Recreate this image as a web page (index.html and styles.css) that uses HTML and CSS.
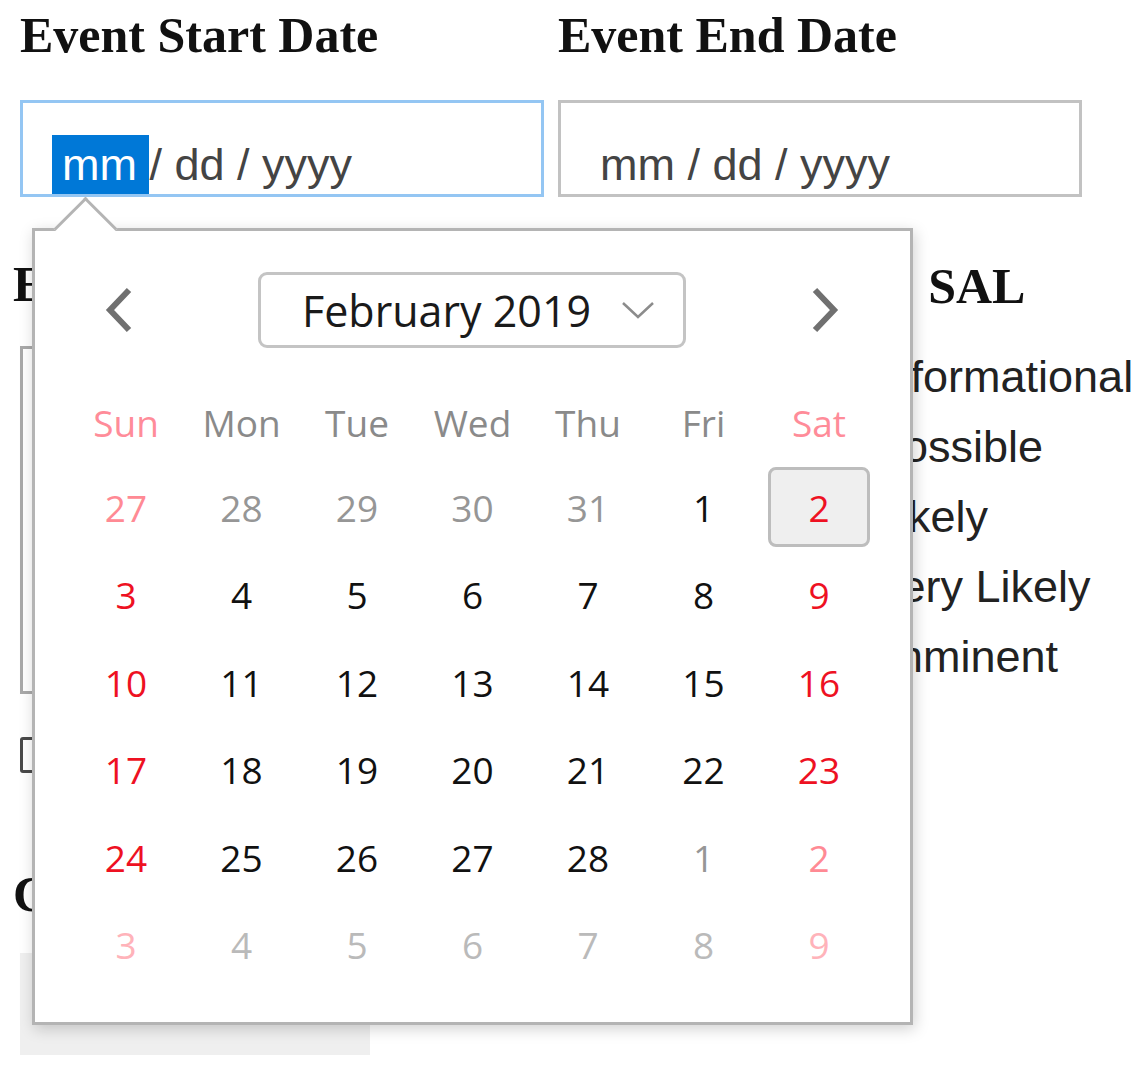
FILE: index.html
```html
<!DOCTYPE html>
<html lang="en">
<head>
  <meta charset="UTF-8" />
  <title>Event Dates</title>
  <meta name="viewport" content="width=device-width, initial-scale=1.0" />
  <link rel="stylesheet" href="styles.css">
</head>
<body>
  <div class="page">
    <div class="column">
      <h3 class="field-title">Event Start Date</h3>
      <div class="date-input focused"><span class="segment-selected">mm </span>/ dd / yyyy</div>
      <h3 class="field-title sub">Event Description</h3>
      <div class="text-area"></div>
      <div class="check-row"><span class="check-box"></span></div>
      <h3 class="field-title sub late">Category</h3>
      <div class="file-button"></div>
    </div>

    <div class="column">
      <h3 class="field-title">Event End Date</h3>
      <div class="date-input">mm / dd / yyyy</div>
      <h3 class="field-title sal">Incident Threat SAL</h3>
      <ul class="radio-list">
        <li><span class="radio"></span>Informational</li>
        <li><span class="radio"></span>Possible</li>
        <li><span class="radio"></span>Likely</li>
        <li><span class="radio"></span>Very Likely</li>
        <li><span class="radio"></span>Imminent</li>
      </ul>
    </div>

    <div class="picker">
      <div class="picker-head">
        <svg class="nav" viewBox="0 0 40 52"><polyline points="30,6 11,26 30,46" fill="none" stroke="#707070" stroke-width="6" /></svg>
        <div class="month-select">
          <span>February 2019</span>
          <svg viewBox="0 0 34 20"><polyline points="2,3 17,17 32,3" fill="none" stroke="#8c8c8c" stroke-width="2.5" /></svg>
        </div>
        <svg class="nav" viewBox="0 0 40 52"><polyline points="10,6 29,26 10,46" fill="none" stroke="#707070" stroke-width="6" /></svg>
      </div>
      <div class="weekdays">
        <div class="weekend">Sun</div>
        <div>Mon</div>
        <div>Tue</div>
        <div>Wed</div>
        <div>Thu</div>
        <div>Fri</div>
        <div class="weekend">Sat</div>
      </div>
      <div class="days" id="days"></div>
    </div>
  </div>

  <script>
    const year = 2019;
    const month = 1;
    const selectedDay = 2;

    function buildDays() {
      const grid = document.getElementById("days");
      const first = new Date(year, month, 1);
      for (let i = 0; i < 42; i++) {
        const d = new Date(year, month, 1 - first.getDay() + i);
        const cell = document.createElement("div");
        cell.className = "day";
        if (d.getMonth() !== month) cell.classList.add(i >= 35 ? "faint" : "other");
        if (d.getDay() === 0 || d.getDay() === 6) cell.classList.add("weekend");
        if (d.getMonth() === month && d.getDate() === selectedDay) cell.classList.add("selected");
        cell.textContent = d.getDate();
        grid.appendChild(cell);
      }
    }

    buildDays();
  </script>
</body>
</html>
```

FILE: styles.css
```css
body {
  margin: 0;
  background: #fff;
  font-family: 'Liberation Serif', 'Times New Roman', serif;
  color: #111;
}
.page {
  position: relative;
  display: grid;
  grid-template-columns: 524px 524px;
  column-gap: 14px;
  padding: 5px 0 0 20px;
}
.field-title {
  margin: 0;
  font-size: 50px;
  line-height: 60px;
  font-weight: bold;
  white-space: nowrap;
}
.field-title.sub {
  margin: 57px 0 0 -7px;
}
.field-title.late {
  margin-top: 91px;
}
.field-title.sal {
  margin-top: 59px;
  word-spacing: 11px;
}
.date-input {
  box-sizing: border-box;
  height: 97px;
  margin-top: 35px;
  padding: 32px 0 0 39px;
  border: 3px solid #c2c2c2;
  font-family: 'Liberation Sans', Arial, sans-serif;
  font-size: 45px;
  line-height: 59px;
  color: #444;
  white-space: pre;
}
.date-input.focused {
  border-color: #94c6f3;
}
.segment-selected {
  display: inline-block;
  margin-left: -10px;
  padding-left: 10px;
  background: #0078d7;
  color: #fff;
  white-space: pre;
}
.text-area {
  box-sizing: border-box;
  height: 348px;
  margin-top: 32px;
  border: 3px solid #a9a9a9;
}
.check-row {
  display: flex;
  align-items: center;
  height: 36px;
  margin-top: 43px;
}
.check-box {
  box-sizing: border-box;
  width: 36px;
  height: 36px;
  border: 3px solid #4a4a4a;
  border-radius: 3px;
}
.file-button {
  width: 350px;
  height: 102px;
  margin-top: 29px;
  background: #efefef;
}
.radio-list {
  margin: 26px 0 0;
  padding: 0 0 0 260px;
  list-style: none;
  font-family: 'Liberation Sans', Arial, sans-serif;
  font-size: 45px;
  line-height: 70px;
  color: #222;
  white-space: nowrap;
}
.radio-list li {
  display: flex;
  align-items: center;
  gap: 19px;
}
.radio {
  flex: none;
  box-sizing: border-box;
  width: 36px;
  height: 36px;
  border: 3px solid #555;
  border-radius: 50%;
}

/* calendar popup */
.picker {
  position: absolute;
  left: 32px;
  top: 228px;
  box-sizing: border-box;
  width: 881px;
  height: 797px;
  background: #fff;
  border: 3px solid #b4b4b4;
  box-shadow: 2px 4px 14px rgba(0, 0, 0, 0.18);
  font-family: 'Open Sans', 'Noto Sans', sans-serif;
}
.picker::before {
  content: "";
  position: absolute;
  left: 28px;
  top: -25px;
  box-sizing: border-box;
  width: 45px;
  height: 45px;
  background: #fff;
  border-top: 3px solid #b4b4b4;
  border-left: 3px solid #b4b4b4;
  transform: rotate(45deg);
}
.picker-head {
  display: flex;
  align-items: center;
  justify-content: space-between;
  height: 76px;
  margin-top: 41px;
  padding: 0 65px 0 64px;
}
.nav {
  width: 40px;
  height: 52px;
}
.month-select {
  box-sizing: border-box;
  display: flex;
  align-items: center;
  justify-content: space-between;
  width: 428px;
  height: 76px;
  padding: 0 28px 0 41px;
  border: 3px solid #c4c4c4;
  border-radius: 9px;
  font-size: 43px;
  color: #1a1a1a;
}
.month-select svg {
  width: 34px;
  height: 20px;
}
.weekdays,
.days {
  display: grid;
  grid-template-columns: repeat(7, 102px);
  column-gap: 13.5px;
  justify-content: center;
  font-size: 37px;
}
.weekdays {
  height: 56px;
  margin-top: 47px;
  color: #8a8a8a;
}
.weekdays div {
  text-align: center;
  line-height: 56px;
}
.weekdays .weekend {
  color: #ff8c99;
}
.days {
  margin-top: 16px;
  grid-auto-rows: 80px;
  row-gap: 7.5px;
}
.day {
  box-sizing: border-box;
  display: flex;
  align-items: center;
  justify-content: center;
  border: 3px solid transparent;
  border-radius: 8px;
  color: #111;
}
.day.weekend {
  color: #ee1122;
}
.day.other {
  color: #969696;
}
.day.other.weekend {
  color: #ff8a94;
}
.day.faint {
  color: #bababa;
}
.day.faint.weekend {
  color: #ffb3ba;
}
.day.selected {
  background: #efefef;
  border-color: #bdbdbd;
}
```
